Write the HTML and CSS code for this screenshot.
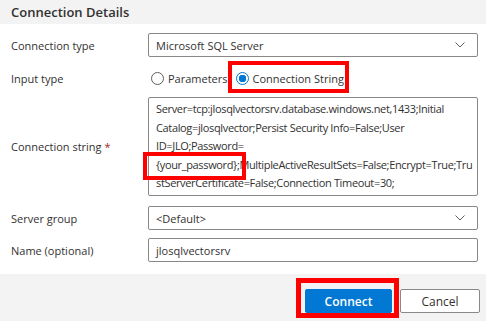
FILE: index.html
```html
<!DOCTYPE html>
<html lang="en">
<head>
  <meta charset="UTF-8">
  <title>Connection Details</title>
  <link rel="stylesheet" href="styles.css">
</head>
<body>

  <div class="dialog">
    <h2 class="title">Connection Details</h2>

    <div class="form">
      <div class="row row-type">
        <label>Connection type</label>
        <div class="select">
          <span>Microsoft SQL Server</span>
          <svg class="chevron" width="10" height="6" viewBox="0 0 10 6"><path d="M0.5 0.5 L5 5 L9.5 0.5" fill="none" stroke="#605e5c" stroke-width="1"/></svg>
        </div>
      </div>

      <div class="row row-input">
        <label>Input type</label>
        <div class="radios">
          <span class="radio"><span class="dot"></span>Parameters</span>
          <span class="radio checked"><span class="dot"></span>Connection String</span>
          <span class="mark mark-radio"></span>
        </div>
      </div>

      <div class="row row-string">
        <label>Connection string <span class="req">*</span></label>
        <div class="textarea">
          <div>Server=tcp:jlosqlvectorsrv.database.windows.net,1433;Initial</div>
          <div>Catalog=jlosqlvector;Persist Security Info=False;User</div>
          <div>ID=JLO;Password=</div>
          <div>{your_password};MultipleActiveResultSets=False;Encrypt=True;Tru</div>
          <div>stServerCertificate=False;Connection Timeout=30;</div>
          <span class="mark mark-pass"></span>
        </div>
      </div>

      <div class="row row-group">
        <label>Server group</label>
        <div class="select">
          <span>&lt;Default&gt;</span>
          <svg class="chevron" width="10" height="6" viewBox="0 0 10 6"><path d="M0.5 0.5 L5 5 L9.5 0.5" fill="none" stroke="#605e5c" stroke-width="1"/></svg>
        </div>
      </div>

      <div class="row row-name">
        <label>Name (optional)</label>
        <div class="input">jlosqlvectorsrv</div>
      </div>
    </div>

    <div class="footer">
      <div class="connect-wrap">
        <button class="btn primary">Connect</button>
        <span class="mark mark-btn"></span>
      </div>
      <button class="btn">Cancel</button>
    </div>
  </div>

</body>
</html>
```

FILE: styles.css
```css
body {
  margin: 0;
  background: #fff;
  font-family: "Open Sans", "Noto Sans", sans-serif;
  font-size: 11px;
  color: #323130;
}

.dialog {
  width: 486px;
  height: 321px;
  display: flex;
  flex-direction: column;
}

.title {
  margin: 0;
  height: 24px;
  line-height: 24px;
  padding-left: 11px;
  background: #f3f3f3;
  font-size: 13px;
  font-weight: 600;
  color: #323130;
}

.form {
  padding: 9px 8px 0 11px;
  flex: 1;
}

.row {
  display: grid;
  grid-template-columns: 137px 330px;
  align-items: center;
}

.row label {
  color: #323130;
}

.row-input { margin-top: 5px; height: 32px; }
.row-string { margin-top: 3px; }
.row-group { margin-top: 10px; }
.row-name { margin-top: 8px; }

.req {
  color: #a4262c;
}

.select,
.input,
.textarea {
  box-sizing: border-box;
  border: 1px solid #8a8886;
  border-radius: 2px;
  padding: 0 7px;
}

.select,
.input {
  height: 24px;
  display: flex;
  align-items: center;
}

.select {
  justify-content: space-between;
}

.chevron {
  margin-right: 5px;
}

.radios {
  position: relative;
  display: flex;
  align-items: center;
  height: 32px;
  padding-left: 3px;
}

.radio {
  display: flex;
  align-items: center;
  margin-right: 8px;
}

.dot {
  box-sizing: border-box;
  width: 13px;
  height: 13px;
  border: 1px solid #605e5c;
  border-radius: 50%;
  margin-right: 4px;
  background: #fff;
}

.checked .dot {
  border-color: #0078d4;
  background: radial-gradient(circle, #0078d4 0 3.5px, #fff 4px);
}

.textarea {
  position: relative;
  height: 99px;
  padding-top: 2px;
  line-height: 18.5px;
  white-space: nowrap;
  letter-spacing: -0.35px;
}

.mark {
  position: absolute;
  border: 4px solid #f00;
  box-sizing: border-box;
  pointer-events: none;
}

.mark-radio {
  left: 80px;
  top: -1px;
  width: 121px;
  height: 32px;
}

.mark-pass {
  left: -6px;
  top: 54px;
  width: 103px;
  height: 28px;
}

.footer {
  height: 47px;
  background: #f3f3f3;
  display: flex;
  justify-content: flex-end;
  align-items: flex-start;
  padding: 15px 6px 0 0;
  box-sizing: border-box;
}

.connect-wrap {
  position: relative;
  margin-right: 8px;
}

.mark-btn {
  left: -9px;
  top: -11px;
  width: 103px;
  height: 40px;
  border-width: 5px;
}

.btn {
  height: 24px;
  width: 80px;
  border: 1px solid #8a8886;
  border-radius: 2px;
  background: #fff;
  color: #323130;
  font-family: "Open Sans", "Noto Sans", sans-serif;
  font-size: 12px;
  padding: 0;
  display: block;
}

.btn.primary {
  width: 87px;
  background: #0078d4;
  border-color: #0078d4;
  color: #fff;
  font-weight: 600;
}
```
